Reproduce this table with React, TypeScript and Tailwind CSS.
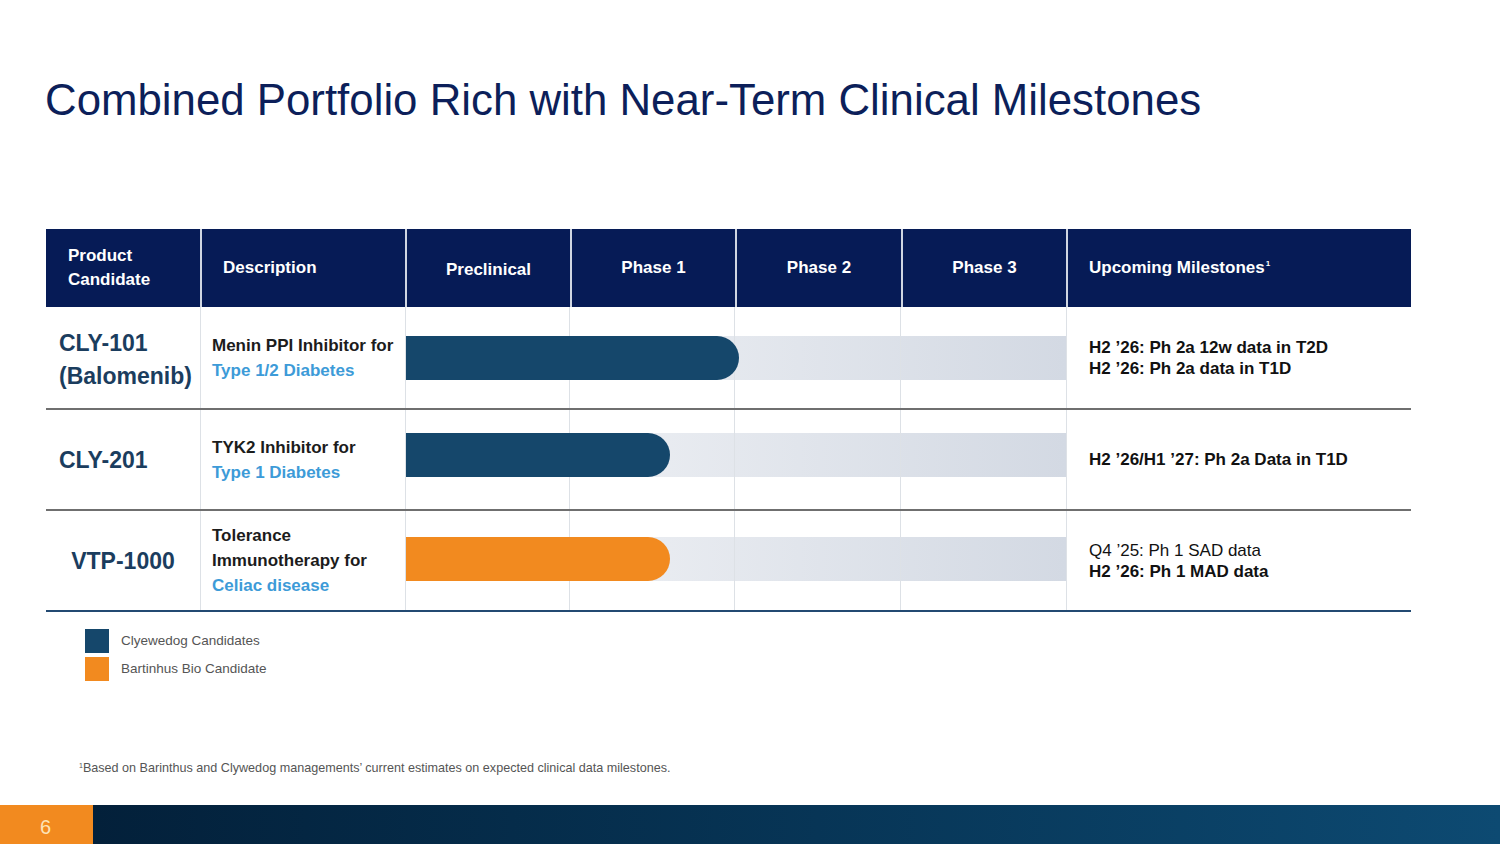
import React from 'react';

const FONT = { fontFamily: '"Liberation Sans", Arial, sans-serif' };

type Row = {
  name: React.ReactNode;
  nameAlign: string;
  desc: string[];
  descBlue: string;
  bar: number;
  barTop: string;
  barColor: string;
  milestones: { text: string; bold: boolean }[];
  height: string;
  border: string;
};

const rows: Row[] = [
  {
    name: (
      <>
        CLY-101
        <br />
        (Balomenib)
      </>
    ),
    nameAlign: 'pl-[13px] text-left pt-[4px]',
    desc: ['Menin PPI Inhibitor for'],
    descBlue: 'Type 1/2 Diabetes',
    bar: 333,
    barTop: 'top-[29px]',
    barColor: 'bg-[#15476b]',
    milestones: [
      { text: 'H2 ’26: Ph 2a 12w data in T2D', bold: true },
      { text: 'H2 ’26: Ph 2a data in T1D', bold: true },
    ],
    height: 'h-[103px]',
    border: 'border-b-2 border-[#6f6f6f]',
  },
  {
    name: 'CLY-201',
    nameAlign: 'pl-[13px] text-left pt-[2px]',
    desc: ['TYK2 Inhibitor for'],
    descBlue: 'Type 1 Diabetes',
    bar: 264,
    barTop: 'top-[23px]',
    barColor: 'bg-[#15476b]',
    milestones: [{ text: 'H2 ’26/H1 ’27: Ph 2a Data in T1D', bold: true }],
    height: 'h-[101px]',
    border: 'border-b-2 border-[#6f6f6f]',
  },
  {
    name: 'VTP-1000',
    nameAlign: 'text-center pt-[2px]',
    desc: ['Tolerance', 'Immunotherapy for'],
    descBlue: 'Celiac disease',
    bar: 264,
    barTop: 'top-[26px]',
    barColor: 'bg-[#f28a1f]',
    milestones: [
      { text: 'Q4 ’25: Ph 1 SAD data', bold: false },
      { text: 'H2 ’26: Ph 1 MAD data', bold: true },
    ],
    height: 'h-[101px]',
    border: 'border-b-2 border-[#234a72]',
  },
];

const cols = 'grid grid-cols-[154px_205px_165px_165px_166px_165px_345px]';

export default function App() {
  return (
    <div className="w-[1500px] h-[844px] bg-white flex flex-col overflow-hidden" style={FONT}>
      <h1 className="mt-[72px] ml-[45px] h-[56px] leading-[56px] text-[43.8px] text-[#0c1f5a] whitespace-nowrap">
        Combined Portfolio Rich with Near-Term Clinical Milestones
      </h1>

      <div className="mt-[101px] ml-[46px] w-[1365px]">
        {/* header */}
        <div className={`${cols} h-[78px] bg-[#061b56] text-white font-bold text-[17px]`}>
          <div className="flex flex-col justify-center pl-[22px] leading-[24px]">
            <span>Product</span>
            <span>Candidate</span>
          </div>
          <div className="flex items-center pl-[21px] border-l-2 border-[#cfd6e2]">Description</div>
          <div className="flex items-center justify-center pt-[3px] border-l-2 border-[#cfd6e2]">Preclinical</div>
          <div className="flex items-center justify-center border-l-2 border-[#cfd6e2]">Phase 1</div>
          <div className="flex items-center justify-center border-l-2 border-[#cfd6e2]">Phase 2</div>
          <div className="flex items-center justify-center border-l-2 border-[#cfd6e2]">Phase 3</div>
          <div className="flex items-center pl-[21px] border-l-2 border-[#cfd6e2]">
            Upcoming Milestones<sup className="text-[8px] ml-[1px] -top-[4px]">1</sup>
          </div>
        </div>

        {rows.map((r, i) => (
          <div key={i} className={`${cols} ${r.height} ${r.border}`}>
            <div
              className={`flex flex-col justify-center ${r.nameAlign} text-[23px] leading-[33px] font-bold text-[#1b3d5e]`}
            >
              <div>{r.name}</div>
            </div>
            <div className="flex flex-col justify-center pl-[11px] border-l border-[#dde1e6] text-[17px] leading-[25px] font-bold text-[#1c1c1c]">
              {r.desc.map((d) => (
                <span key={d}>{d}</span>
              ))}
              <span className="text-[#3d9bd8]">{r.descBlue}</span>
            </div>
            <div className="col-span-4 relative border-l border-[#dde1e6]">
              <div
                className={`absolute inset-x-0 ${r.barTop} h-[44px] bg-gradient-to-r from-[#f6f7f9] to-[#d3d9e3]`}
              />
              <div className="absolute inset-0 grid grid-cols-[164px_165px_166px_165px]">
                <div className="border-r border-[#dde1e6]" />
                <div className="border-r border-[#dde1e6]" />
                <div className="border-r border-[#dde1e6]" />
                <div />
              </div>
              <div
                className={`absolute left-0 ${r.barTop} h-[44px] rounded-r-full ${r.barColor}`}
                style={{ width: r.bar }}
              />
            </div>
            <div className="flex flex-col justify-center pl-[22px] border-l border-[#dde1e6] text-[17px] leading-[21px] text-[#111]">
              {r.milestones.map((m) => (
                <span key={m.text} className={m.bold ? 'font-bold' : 'font-normal'}>
                  {m.text}
                </span>
              ))}
            </div>
          </div>
        ))}
      </div>

      {/* legend */}
      <div className="mt-[17px] ml-[85px] flex flex-col gap-[4px] text-[13.5px] text-[#555]">
        <div className="flex items-center gap-[12px]">
          <div className="w-[24px] h-[24px] bg-[#15476b]" />
          <span>Clyewedog Candidates</span>
        </div>
        <div className="flex items-center gap-[12px]">
          <div className="w-[24px] h-[24px] bg-[#f28a1f]" />
          <span>Bartinhus Bio Candidate</span>
        </div>
      </div>

      <p className="mt-[80px] ml-[79px] text-[12.6px] leading-[14px] text-[#555] whitespace-nowrap">
        <sup className="text-[7px] -top-[4px]">1</sup>Based on Barinthus and Clywedog managements’ current estimates on
        expected clinical data milestones.
      </p>

      <div className="mt-auto h-[39px] flex">
        <div className="w-[93px] bg-[#f28a1f] flex items-center justify-center pt-[5px] pr-[2px] text-[20px] text-[#fde3b8]">
          6
        </div>
        <div className="flex-1 bg-gradient-to-r from-[#03203a] to-[#0d4a72]" />
      </div>
    </div>
  );
}
